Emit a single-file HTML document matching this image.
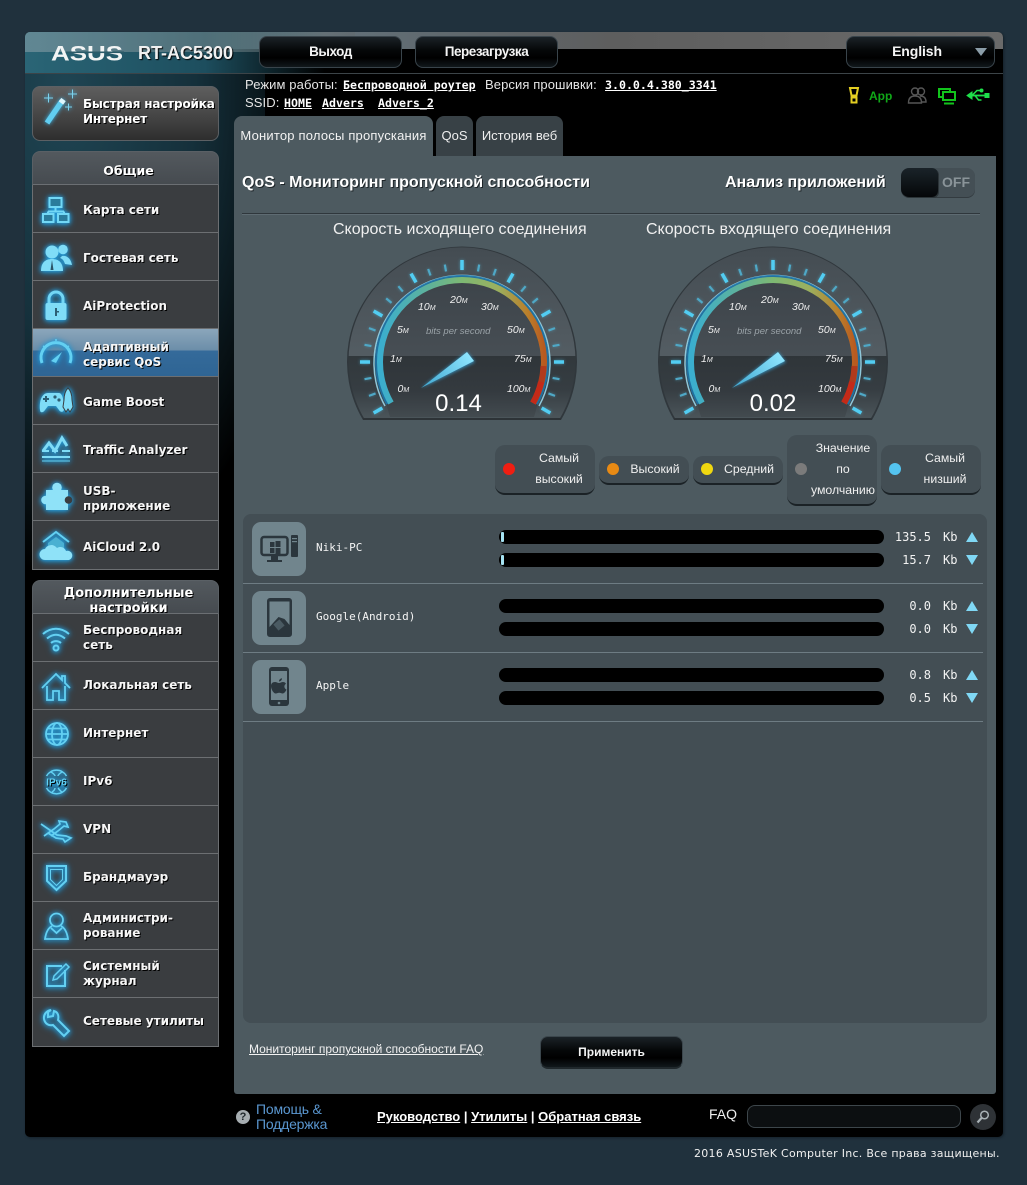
<!DOCTYPE html>
<html lang="ru"><head><meta charset="utf-8"><title>ASUS RT-AC5300</title>
<style>
html,body{margin:0;padding:0}
body{width:1027px;height:1185px;position:relative;overflow:hidden;background:#20313d;font-family:"Liberation Sans",Arial,sans-serif;color:#fff}
.a{position:absolute;white-space:nowrap}
#main{position:absolute;left:25px;top:32px;width:978px;height:1105px;border-radius:5px;background:#000;overflow:hidden;box-shadow:1px 1px 2px #15212a}
.btn{position:absolute;background:linear-gradient(#1b2227,#050708 45%,#000 70%,#11181c);border:1px solid #39444b;border-radius:8px;font-weight:bold;font-size:13.5px;letter-spacing:-.45px;text-align:center;box-sizing:border-box;color:#f4f4f4}
.m{font:bold 11.6px "DejaVu Sans Mono",monospace;text-decoration:underline;color:#fff;letter-spacing:0}
.st{font-size:13px;letter-spacing:.1px;color:#e6e6e6}
.tab{position:absolute;top:116px;height:40px;border-radius:8px 8px 0 0;background:#384146;font-size:13px;line-height:39px;text-align:center;color:#eee}
.grp{position:absolute;left:32px;width:187px;box-sizing:border-box}
.hd{background:linear-gradient(#53595e,#464b50);border:1px solid #5a6065;border-bottom:1px solid #6b6f73;border-radius:8px 8px 0 0;box-sizing:border-box;text-align:center;font:bold 13px/15px "DejaVu Sans",sans-serif;text-shadow:1px 1px 0 #000;overflow:hidden;width:187px;padding-left:6px}
.it{height:48px;box-sizing:border-box;background:#3a3d40;border:1px solid #6c6f72;border-top:0;padding-left:50px;display:flex;align-items:center;font:bold 12px/15px "DejaVu Sans",sans-serif;text-shadow:1px 1px 0 #000;position:relative;color:#f6f6f6}
.g1 .it{padding-top:4px}
.it.sel{background:linear-gradient(#8ba6bb,#6c8ea9 21px,#346a9a 22px,#2f6594);}
.i{position:absolute;left:5px;top:6px;width:36px;height:36px;filter:drop-shadow(0 0 2px #2ba4e0) drop-shadow(0 1px 3px #1d87c0);overflow:visible}
.lg{position:absolute;background:#434e54;border-bottom:2px solid #1b2226;border-radius:10px;box-sizing:border-box;font-size:12.3px;line-height:21px;text-align:center;color:#f0f0f0}
.dot{position:absolute;width:12px;height:12px;border-radius:50%}
.bar{position:absolute;left:499px;width:385px;height:14px;border-radius:7px;background:#000}
.fill{position:absolute;left:2px;top:2px;width:3px;height:10px;background:#a6e3f2;border-radius:1px}
.v{position:absolute;width:60px;left:871px;text-align:right;font:12px/16px "DejaVu Sans Mono",monospace;color:#f2f2f2}
.k{position:absolute;left:943px;font:12px/16px "DejaVu Sans Mono",monospace;color:#f2f2f2}
.up,.dn{position:absolute;left:966px;width:0;height:0;border-left:6.5px solid transparent;border-right:6.5px solid transparent}
.up{border-bottom:10px solid #80d8f5}.dn{border-top:10px solid #80d8f5}
.ln{position:absolute;left:243px;width:740px;height:1px;background:#6e7c83}
.dev{position:absolute;left:252px;width:54px;height:54px;border-radius:9px;background:#71858d}
.nm{position:absolute;left:316px;font:11px/16px "DejaVu Sans Mono",monospace;color:#f4f4f4}
u{text-decoration:underline}
</style></head><body>
<div id="main">
<div class="a" style="left:0;top:0;width:978px;height:17px;background:linear-gradient(90deg,#6d8a96,#62717a 30%,#5e5e5e 60%,#6a6a6a 100%)"></div>
<div class="a" style="left:0;top:0;width:300px;height:41px;background:linear-gradient(90deg,#2a6576,#1d4e5e 60%,rgba(0,0,0,0))"></div>
<div class="a" style="left:0;top:0;width:330px;height:20px;background:linear-gradient(90deg,rgba(120,150,160,.7),rgba(110,130,135,.6) 60%,rgba(100,100,100,.3))"></div>
<div class="a" style="left:0;top:41px;width:240px;height:640px;background:radial-gradient(ellipse 260px 480px at 40px 20px,#1f4553 0,#15303b 50%,rgba(0,0,0,0) 100%)"></div>
<div class="a" style="left:0;top:41px;width:978px;height:1px;background:#3c4448"></div>
</div>

<svg class="a" style="left:48px;top:42px" width="78" height="22" viewBox="0 0 78 22"><text x="3" y="18.500" font-family="Liberation Sans" font-weight="bold" font-size="21" fill="#f2f4f4" textLength="72" lengthAdjust="spacingAndGlyphs">ASUS</text><rect x="18" y="9.500" width="58" height="1.600" fill="#2a5a68"/></svg>
<div class="a" style="left:138px;top:42px;font-weight:bold;font-size:18px;line-height:22px;color:#f0f0f0;text-shadow:1px 1px 1px #000">RT-AC5300</div>

<div class="btn" style="left:259px;top:36px;width:143px;height:32px;line-height:29px">Выход</div>
<div class="btn" style="left:415px;top:36px;width:143px;height:32px;line-height:29px">Перезагрузка</div>
<div class="btn" style="left:846px;top:36px;width:149px;height:32px;line-height:29px;padding-right:7px;font-size:14px;letter-spacing:-.1px">English</div>
<div class="a" style="left:975px;top:48px;width:0;height:0;border-left:6.5px solid transparent;border-right:6.5px solid transparent;border-top:8px solid #8b9da8"></div>

<div class="a st" style="left:245px;top:77px;line-height:16px">Режим работы:</div>
<div class="a m" style="left:343px;top:77px;line-height:16px">Беспроводной роутер</div>
<div class="a st" style="left:485px;top:77px;line-height:16px">Версия прошивки:</div>
<div class="a m" style="left:605px;top:77px;line-height:16px">3.0.0.4.380_3341</div>
<div class="a st" style="left:245px;top:95px;line-height:16px">SSID:</div>
<div class="a m" style="left:284px;top:95px;line-height:16px">HOME</div>
<div class="a m" style="left:322px;top:95px;line-height:16px">Advers</div>
<div class="a m" style="left:378px;top:95px;line-height:16px">Advers_2</div>

<svg class="a" style="left:846px;top:84px" width="146" height="24" viewBox="846 84 146 24">
<path d="M850 88h8l-1.500 7.500h-5z M851.500 97.500h5v5h-5z" fill="none" stroke="#e4cf22" stroke-width="2"/>
<text x="869" y="100" font-family="Liberation Sans" font-weight="bold" font-size="12" fill="#10a818">App</text>
<g fill="none" stroke="#565656" stroke-width="1.400"><circle cx="915" cy="91.500" r="3.500"/><circle cx="921" cy="91.500" r="3.500"/><path d="M908.500 103c0-5 2.500-7 6.500-7s6.500 2 6.500 7z"/><path d="M920 96c4 0 6 2 6 6h-4"/></g>
<g fill="none" stroke="#12c41c" stroke-width="2"><path d="M943 97h-4v-8h11v3"/><rect x="943" y="92" width="12" height="8"/><path d="M944 103.500h10"/></g>
<g fill="#1ee04a" stroke="#1ee04a"><path d="M970 95.500h15" stroke-width="1.800"/><path d="M967 95.500l5-3.500v7z"/><path d="M972 95.500l5-5h3M975 95.500l3.500 4.500h3" fill="none" stroke-width="1.500"/><circle cx="981.500" cy="90.500" r="1.500"/><rect x="985" y="93.500" width="4" height="4"/></g>
</svg>

<div class="tab" style="left:234px;width:199px;background:#4d5a60;color:#f2f2f2;letter-spacing:.2px">Монитор полосы пропускания</div>
<div class="tab" style="left:436px;width:37px">QoS</div>
<div class="tab" style="left:476px;width:87px">История веб</div>

<!-- content -->
<div class="a" style="left:234px;top:156px;width:762px;height:938px;background:#4d5a60;border-radius:0 0 3px 3px"></div>
<div class="a" style="left:242px;top:173px;font-weight:bold;font-size:16px;line-height:19px;text-shadow:1px 1px 0 #1e2529">QoS - Мониторинг пропускной способности</div>
<div class="a" style="left:725px;top:173px;font-weight:bold;font-size:16px;line-height:19px;text-shadow:1px 1px 0 #1e2529">Анализ приложений</div>
<div class="a" style="left:901px;top:168px;width:74px;height:29px;background:#444f55;border-radius:8px;box-shadow:0 1px 0 #333b40"></div>
<div class="a" style="left:901px;top:168px;width:37px;height:29px;background:linear-gradient(#1a2329,#050709);border-radius:8px 6px 6px 8px;box-shadow:1px 1px 0 #2c3438"></div>
<div class="a" style="left:942px;top:174px;font-weight:bold;font-size:14px;line-height:17px;color:#8a9499">OFF</div>
<div class="a" style="left:242px;top:213px;width:738px;height:1px;background:#2f373c;border-bottom:1px solid #5e6b72"></div>
<div class="a" style="left:333px;top:220px;font-size:16px;line-height:19px;color:#f0f0f0">Скорость исходящего соединения</div>
<div class="a" style="left:646px;top:220px;font-size:16px;line-height:19px;color:#f0f0f0">Скорость входящего соединения</div>

<svg class="a" style="left:340px;top:240px" width="560" height="190" viewBox="340 240 560 190">
<defs>
<linearGradient id="dm" gradientUnits="userSpaceOnUse" x1="0" y1="248" x2="0" y2="420"><stop offset="0" stop-color="#444c52"/><stop offset=".6" stop-color="#535c62"/><stop offset=".627" stop-color="#535c62"/><stop offset=".628" stop-color="#31383c"/><stop offset=".82" stop-color="#363d42"/><stop offset="1" stop-color="#4c565b"/></linearGradient>
<linearGradient id="dk" gradientUnits="userSpaceOnUse" x1="0" y1="274" x2="0" y2="420"><stop offset="0" stop-color="#3c4349"/><stop offset=".56" stop-color="#474e54"/><stop offset=".561" stop-color="#2f3539"/><stop offset=".8" stop-color="#343a3f"/><stop offset="1" stop-color="#444c51"/></linearGradient>
<linearGradient id="ar" gradientUnits="userSpaceOnUse" x1="380" y1="0" x2="544" y2="0"><stop offset="0" stop-color="#3aaecf"/><stop offset=".3" stop-color="#5fb29a"/><stop offset=".5" stop-color="#7db873"/><stop offset=".72" stop-color="#9bb05f"/><stop offset=".9" stop-color="#bb7f2a"/><stop offset="1" stop-color="#b85a20"/></linearGradient>
<linearGradient id="nd" gradientUnits="userSpaceOnUse" x1="421" y1="388" x2="472" y2="356"><stop offset="0" stop-color="#3fa6cf"/><stop offset="1" stop-color="#8fe6ff"/></linearGradient>
<filter id="gl" x="-30%" y="-30%" width="160%" height="160%"><feGaussianBlur stdDeviation="1.600"/></filter>
<g id="tk1" stroke="#52cdf2" stroke-width="3.500"><line x1="462" y1="260" x2="462" y2="270"/></g>
<g id="tk2" stroke="#4fa8c6" stroke-width="2.200"><line x1="462" y1="263" x2="462" y2="270"/></g>
<g id="ticks">
<use href="#tk1"/><use href="#tk1" transform="rotate(30 462 362)"/><use href="#tk1" transform="rotate(60 462 362)"/><use href="#tk1" transform="rotate(90 462 362)"/><use href="#tk1" transform="rotate(120 462 362)"/><use href="#tk1" transform="rotate(-30 462 362)"/><use href="#tk1" transform="rotate(-60 462 362)"/><use href="#tk1" transform="rotate(-90 462 362)"/><use href="#tk1" transform="rotate(-120 462 362)"/>
<use href="#tk2" transform="rotate(10 462 362)"/><use href="#tk2" transform="rotate(20 462 362)"/><use href="#tk2" transform="rotate(40 462 362)"/><use href="#tk2" transform="rotate(50 462 362)"/><use href="#tk2" transform="rotate(70 462 362)"/><use href="#tk2" transform="rotate(80 462 362)"/><use href="#tk2" transform="rotate(100 462 362)"/><use href="#tk2" transform="rotate(110 462 362)"/>
<use href="#tk2" transform="rotate(-10 462 362)"/><use href="#tk2" transform="rotate(-20 462 362)"/><use href="#tk2" transform="rotate(-40 462 362)"/><use href="#tk2" transform="rotate(-50 462 362)"/><use href="#tk2" transform="rotate(-70 462 362)"/><use href="#tk2" transform="rotate(-80 462 362)"/><use href="#tk2" transform="rotate(-100 462 362)"/><use href="#tk2" transform="rotate(-110 462 362)"/>
</g>
<g id="gauge">
<path d="M363 420A115 115 0 1 1 561 420Z" fill="#30373c"/>
<path d="M364.500 419A113.500 113.500 0 1 1 559.500 419Z" fill="url(#dm)"/>
<rect x="363" y="418" width="198" height="2" fill="#2d3337"/>
<path d="M386.700 405.500A87 87 0 1 1 537.300 405.500L534 417H390Z" fill="url(#dk)"/>
<path d="M385 406A88 88 0 1 1 539 406" fill="none" stroke="#8fc7d9" stroke-width="1.500"/>
<path d="M387.500 404A85.500 85.500 0 1 1 536.500 404" fill="none" stroke="#1f76a8" stroke-width="3" opacity=".9"/>
<path d="M391 403A82 82 0 1 1 533 403" fill="none" stroke="url(#ar)" stroke-width="6"/>
<path d="M543.500 366A82 82 0 0 1 533 403" fill="none" stroke="#b13a1c" stroke-width="6"/>
<path d="M541 382A82 82 0 0 1 533 403" fill="none" stroke="#c42a18" stroke-width="6"/>
<use href="#ticks" filter="url(#gl)" opacity=".55"/>
<use href="#ticks"/>
<g font-family="Liberation Sans" font-style="italic" font-size="10.500" fill="#f0f0f0">
<text x="397.500" y="392">0<tspan font-size="7">M</tspan></text>
<text x="390" y="362">1<tspan font-size="7">M</tspan></text>
<text x="397" y="333">5<tspan font-size="7">M</tspan></text>
<text x="418" y="310">10<tspan font-size="7">M</tspan></text>
<text x="450" y="303">20<tspan font-size="7">M</tspan></text>
<text x="481" y="310">30<tspan font-size="7">M</tspan></text>
<text x="507" y="333">50<tspan font-size="7">M</tspan></text>
<text x="514" y="362">75<tspan font-size="7">M</tspan></text>
<text x="507" y="392">100<tspan font-size="7">M</tspan></text>
<text x="426" y="334" font-size="9.500" fill="#9aa3a8">bits per second</text>
</g>
<polygon points="421,388 467,352 475,362" fill="#39a9e0" filter="url(#gl)" opacity=".8"/>
<polygon points="421,388 467,352 474,361" fill="url(#nd)"/>
</g>
</defs>
<use href="#gauge"/>
<use href="#gauge" x="311"/>
<text x="458.500" y="411" text-anchor="middle" font-family="Liberation Sans" font-size="24" fill="#fff">0.14</text>
<text x="773" y="411" text-anchor="middle" font-family="Liberation Sans" font-size="24" fill="#fff">0.02</text>
</svg>

<!-- legend -->
<div class="lg" style="left:495px;top:445px;width:100px;height:50px;padding:3px 0 0 28px;width:100px">Самый<br>высокий</div><div class="dot" style="left:503px;top:463px;background:#f01e12"></div>
<div class="lg" style="left:599px;top:456px;width:90px;height:29px;line-height:26px;padding-left:22px">Высокий</div><div class="dot" style="left:607px;top:463px;background:#e88a14"></div>
<div class="lg" style="left:693px;top:456px;width:90px;height:29px;line-height:26px;padding-left:22px">Средний</div><div class="dot" style="left:701px;top:463px;background:#f0d810"></div>
<div class="lg" style="left:787px;top:435px;width:90px;height:71px;padding:3px 0 0 22px;white-space:normal">Значение<br>по<br>умолчанию</div><div class="dot" style="left:795px;top:463px;background:#7b7b7b"></div>
<div class="lg" style="left:881px;top:445px;width:100px;height:50px;padding:3px 0 0 28px">Самый<br>низший</div><div class="dot" style="left:889px;top:463px;background:#54c4f0"></div>

<!-- table -->
<div class="a" style="left:243px;top:514px;width:744px;height:509px;background:#434e54;border-radius:8px"></div>
<div class="ln" style="top:583px"></div><div class="ln" style="top:652px"></div><div class="ln" style="top:721px"></div>

<div class="dev" style="top:522px"></div><div class="dev" style="top:591px"></div><div class="dev" style="top:660px"></div>
<svg class="a" style="left:252px;top:522px" width="54" height="192" viewBox="252 522 54 192">
<g fill="none" stroke="#2b363d" stroke-width="2.500"><rect x="261.500" y="537" width="26" height="18" rx="2.500"/></g>
<g fill="#2b363d"><rect x="271" y="556" width="7" height="4"/><rect x="267" y="560" width="15" height="2"/><rect x="291" y="535" width="7" height="22" rx="1"/>
<rect x="270" y="542" width="4.500" height="5"/><rect x="275.500" y="541" width="5" height="6"/><rect x="270" y="548" width="4.500" height="5"/><rect x="275.500" y="548" width="5" height="6"/></g>
<rect x="292" y="538" width="5" height="1.200" fill="#71858d"/><rect x="292" y="541" width="5" height="1.200" fill="#71858d"/>
<rect x="267" y="598" width="25" height="39" rx="3" fill="#2b363d"/><rect x="269.500" y="601.500" width="20" height="30" fill="#71858d"/>
<path d="M269.500 627l9-10 6 2 5 6v6.500h-20z" fill="#2b363d"/><rect x="275" y="621" width="8" height="8" transform="rotate(-40 279 625)" fill="#4a5a62"/>
<rect x="269" y="667" width="20" height="39" rx="3" fill="#2b363d"/><rect x="271" y="671" width="16" height="29" fill="#71858d"/>
<path d="M275 682c1.500 0 2.800 1 4 1s2.500-1 4-1c1.300 0 2.300.6 3 1.700-2.400 1.500-2 4.800.5 5.800-.8 2-2.300 4-3.800 4-1.300 0-2-.8-3.500-.8s-2.200.8-3.500.8c-2 0-4.700-4-4.700-7.500 0-2.600 1.500-4 4-4z" fill="#2b363d"/><path d="M279 681.500c0-1.800 1.200-3 3-3.200 0 1.800-1.200 3-3 3.200z" fill="#2b363d"/>
<circle cx="279" cy="703" r="1.300" fill="#71858d"/>
</svg>
<div class="nm" style="top:540px">Niki-PC</div>
<div class="nm" style="top:609px">Google(Android)</div>
<div class="nm" style="top:678px">Apple</div>

<div class="bar" style="top:530px"><div class="fill"></div></div><div class="bar" style="top:553px"><div class="fill"></div></div>
<div class="bar" style="top:599px"></div><div class="bar" style="top:622px"></div>
<div class="bar" style="top:668px"></div><div class="bar" style="top:691px"></div>

<div class="v" style="top:529px">135.5</div><div class="k" style="top:529px">Kb</div><div class="up" style="top:532px"></div>
<div class="v" style="top:552px">15.7</div><div class="k" style="top:552px">Kb</div><div class="dn" style="top:555px"></div>
<div class="v" style="top:598px">0.0</div><div class="k" style="top:598px">Kb</div><div class="up" style="top:601px"></div>
<div class="v" style="top:621px">0.0</div><div class="k" style="top:621px">Kb</div><div class="dn" style="top:624px"></div>
<div class="v" style="top:667px">0.8</div><div class="k" style="top:667px">Kb</div><div class="up" style="top:670px"></div>
<div class="v" style="top:690px">0.5</div><div class="k" style="top:690px">Kb</div><div class="dn" style="top:693px"></div>

<div class="a" style="left:249px;top:1042px;font-size:12px;line-height:15px;text-decoration:underline;color:#f2f2f2">Мониторинг пропускной способности FAQ</div>
<div class="btn" style="left:540px;top:1036px;width:143px;height:33px;line-height:30px;font-size:12px;letter-spacing:0;border-color:#3b464c;border-bottom:2px solid #20282c">Применить</div>

<!-- footer -->
<div class="a" style="left:236px;top:1110px;width:14px;height:14px;border-radius:50%;background:#a6adb1;color:#20282c;font:bold 11px/14px 'Liberation Sans';text-align:center">?</div>
<div class="a" style="left:256px;top:1102px;font-size:14px;line-height:15px;letter-spacing:-.2px;color:#5a96cf">Помощь &amp;<br>Поддержка</div>
<div class="a" style="left:377px;top:1108px;font-size:13px;line-height:17px;color:#fff;font-weight:bold"><u>Руководство</u> | <u>Утилиты</u> | <u>Обратная связь</u></div>
<div class="a" style="left:709px;top:1106px;font-size:14px;line-height:17px;color:#eee">FAQ</div>
<div class="a" style="left:747px;top:1105px;width:214px;height:23px;border:1px solid #3d464b;border-radius:8px;background:#0c0f11;box-sizing:border-box"></div>
<div class="a" style="left:970px;top:1104px;width:26px;height:26px;border-radius:50%;background:#2e3236"></div>
<svg class="a" style="left:975px;top:1109px" width="16" height="16" viewBox="0 0 16 16"><circle cx="9.500" cy="6" r="3.800" fill="none" stroke="#a9b2b6" stroke-width="1.500"/><path d="M6.500 9L2.500 13.500" stroke="#a9b2b6" stroke-width="2.200"/></svg>
<div class="a" style="left:694px;top:1147px;font:11px/14px 'DejaVu Sans',sans-serif;letter-spacing:.28px;color:#f0f0f0">2016 ASUSTeK Computer Inc. Все права защищены.</div>

<!-- sidebar -->
<div class="a" style="left:32px;top:86px;width:187px;height:55px;box-sizing:border-box;border:1px solid #5c6064;border-radius:8px;background:linear-gradient(#5e5e5e,#4a4a4a 45%,#2e2e2e);font:bold 12px/15px 'DejaVu Sans',sans-serif;letter-spacing:-.17px;text-shadow:1px 1px 0 #000;padding:10px 0 0 50px">Быстрая настройка<br>Интернет</div>
<svg class="a" style="left:40px;top:88px;filter:drop-shadow(0 0 2px #3ab6ea)" width="40" height="42" viewBox="0 0 40 42"><path d="M7 35L22 13" stroke="#61cdf0" stroke-width="5.500"/><path d="M21 15l2.500-3.500" stroke="#dff6fd" stroke-width="5.500"/><path d="M4 10h9M8.500 5.500v9M28 6h9M32.500 1.500v9M25 19h7M28.500 15.500v7" stroke="#7cd3ee" stroke-width="1"/></svg>

<div class="grp g1" style="top:151px">
<div class="hd" style="height:34px;line-height:37px;font-size:12.500px">Общие</div>
<div class="it">Карта сети<svg class="i" viewBox="0 0 36 36"><g fill="#2a7c9c" stroke="#72d8f6" stroke-width="2"><rect x="11.500" y="7" width="12" height="9"/><path d="M17.500 16v4M10 20.500h16M10 20.500v2M26 20.500v2" fill="none"/><rect x="5" y="23" width="10.500" height="8"/><rect x="20" y="23" width="10.500" height="8"/></g></svg></div>
<div class="it">Гостевая сеть<svg class="i" viewBox="0 0 36 36"><g fill="#7fdcf7"><circle cx="14" cy="13" r="6.500"/><path d="M3 32c0-8 4-12 11-12s11 4 11 12z"/><circle cx="25" cy="10.500" r="4.800"/><path d="M24 17c5-1 9 3 10 9l-7-1c-1-3-2-5-5-6z"/></g><path d="M14 21l-1.500 10h3z" fill="#2a5366"/></svg></div>
<div class="it">AiProtection<svg class="i" viewBox="0 0 36 36"><path d="M11 17v-5a7 7 0 0 1 14 0v5" fill="none" stroke="#73d6f5" stroke-width="3"/><rect x="7.500" y="16" width="21" height="17" rx="2" fill="#7fdcf7"/><path d="M17 21h2v8h-2z M19 24h2v1.500h-2z" fill="#2c5f75"/></svg></div>
<div class="it sel">Адаптивный<br>сервис QoS<svg class="i" viewBox="0 0 36 36" style="top:7px"><path d="M4 27A15 15 0 1 1 32 27" fill="none" stroke="#63d0f2" stroke-width="3"/><path d="M13 25l11-9-6 11z" fill="#63d0f2"/><path d="M18 5v-2M7 11l-2-1M29 11l2-1" stroke="#63d0f2" stroke-width="1.500"/></svg></div>
<div class="it">Game Boost<svg class="i" viewBox="0 0 36 36"><path d="M2 27C1 18 4 10 10 10h11c3 0 5 6 5 16 0 3-3 4-5 1l-3-4H10l-3 4c-2 3-5 3-5 0z" fill="#7fdcf7"/><path d="M8 13v6M5 16h6" stroke="#2c5f75" stroke-width="2"/><circle cx="17" cy="14" r="1.600" fill="#2c5f75"/><circle cx="21" cy="17" r="1.600" fill="#2c5f75"/><path d="M30 5c3 3 4 7 4 12l1 7-3 5-2-3-2 3-3-5 1-7c0-5 1-9 4-12z" fill="#7fdcf7" stroke="#3a3d40" stroke-width="1"/></svg></div>
<div class="it">Traffic Analyzer<svg class="i" viewBox="0 0 36 36"><path d="M5 20l6-8 6 8 7-13 5 8" fill="none" stroke="#7fdcf7" stroke-width="3"/><path d="M4 20h7M14 20h6M24 20h8M4 26h28" stroke="#7fdcf7" stroke-width="2"/><path d="M4 30h28" stroke="#63d0f2" stroke-width="1"/></svg></div>
<div class="it">USB-<br>приложение<svg class="i" viewBox="0 0 36 36"><rect x="8" y="11" width="22" height="20" fill="#8fe2f8"/><circle cx="19" cy="8.500" r="4.800" fill="#8fe2f8"/><circle cx="7.500" cy="21" r="4.300" fill="#8fe2f8"/><circle cx="30.500" cy="21" r="3.800" fill="#3a3d40"/></svg></div>
<div class="it" style="height:49px">AiCloud 2.0<svg class="i" viewBox="0 0 36 36"><path d="M5 15L18 5l13 10" fill="none" stroke="#63d0f2" stroke-width="2"/><path d="M10 16l8-6 8 6v6H10z" fill="#4ab0d2"/><path d="M7 33a5.500 5.500 0 0 1 0-11 7 7 0 0 1 12-1 6 6 0 0 1 9 3 4.500 4.500 0 0 1 3 9z" fill="#8fe2f8"/></svg></div>
</div>

<div class="grp" style="top:580px">
<div class="hd" style="height:34px;padding-top:5px">Дополнительные<br>настройки</div>
<div class="it" style="height:48px">Беспроводная<br>сеть<svg class="i" viewBox="0 0 36 36"><g fill="none" stroke="#63d0f2" stroke-width="2"><path d="M5 14c8-7 18-7 26 0M9 18.500c6-5 12-5 18 0M13 23c3-2.500 7-2.500 10 0"/><circle cx="18" cy="28" r="2.500"/></g></svg></div>
<div class="it">Локальная сеть<svg class="i" viewBox="0 0 36 36"><path d="M4 20L18 6l6 6V8h3v7l5 5M9 18v14h6v-9h6v9h6V18" fill="none" stroke="#63d0f2" stroke-width="1.800"/></svg></div>
<div class="it">Интернет<svg class="i" viewBox="0 0 36 36"><g fill="none" stroke="#63d0f2" stroke-width="1.800"><circle cx="19" cy="18" r="11"/><ellipse cx="19" cy="18" rx="5" ry="11"/><path d="M8 18h22M10 12.500h18M10 23.500h18"/></g></svg></div>
<div class="it">IPv6<svg class="i" viewBox="0 0 36 36"><g fill="none" stroke="#63d0f2" stroke-width="1.500"><path d="M8.500 12a11.500 11.500 0 0 1 20 0M8.500 24a11.500 11.500 0 0 0 20 0M13 8c2 1 4 3 4 4M24 8c-2 1-4 3-4 4M14 28c2-1 3-3 3-4M24 28c-2-1-3-3-4-4"/></g><text x="18.500" y="21.500" text-anchor="middle" font-family="Liberation Sans" font-size="10" fill="#63d0f2">IPv6</text></svg></div>
<div class="it">VPN<svg class="i" viewBox="0 0 36 36"><g fill="none" stroke="#63d0f2" stroke-width="1.700"><path d="M3 12l16 11 9 1 5 2-6 4-2-3-7-1-8-5"/><path d="M6 24l10-7 6-5-1-3 7 1 2 5-4-1-6 5-7 5"/></g></svg></div>
<div class="it">Брандмауэр<svg class="i" viewBox="0 0 36 36"><path d="M9 6h19v15l-9.500 9L9 21z" fill="none" stroke="#63d0f2" stroke-width="2"/><path d="M12.500 9.500h12v10l-6 6-6-6z" fill="none" stroke="#63d0f2" stroke-width="1"/></svg></div>
<div class="it">Администри-<br>рование<svg class="i" viewBox="0 0 36 36"><g fill="none" stroke="#63d0f2" stroke-width="1.800"><circle cx="18.500" cy="12" r="6.500"/><path d="M14 18c-4 2-6 6-7 13h23c-1-7-3-11-7-13M13 20l5.500 5 5.500-5"/></g></svg></div>
<div class="it">Системный<br>журнал<svg class="i" viewBox="0 0 36 36"><path d="M27 14v16H9V10h15" fill="none" stroke="#63d0f2" stroke-width="2"/><path d="M15 24l1-4 12-12 3 3-12 12z" fill="none" stroke="#63d0f2" stroke-width="1.500"/></svg></div>
<div class="it" style="height:49px;padding-bottom:2px">Сетевые утилиты<svg class="i" viewBox="0 0 36 36"><path d="M13 6a8 8 0 0 0-7 9c1 5 5 7 9 6l11 11 5-5-11-11c1-4 0-8-4-9l-1 5-5 1 0-5z" fill="none" stroke="#63d0f2" stroke-width="2"/></svg></div>
</div>
</body></html>
